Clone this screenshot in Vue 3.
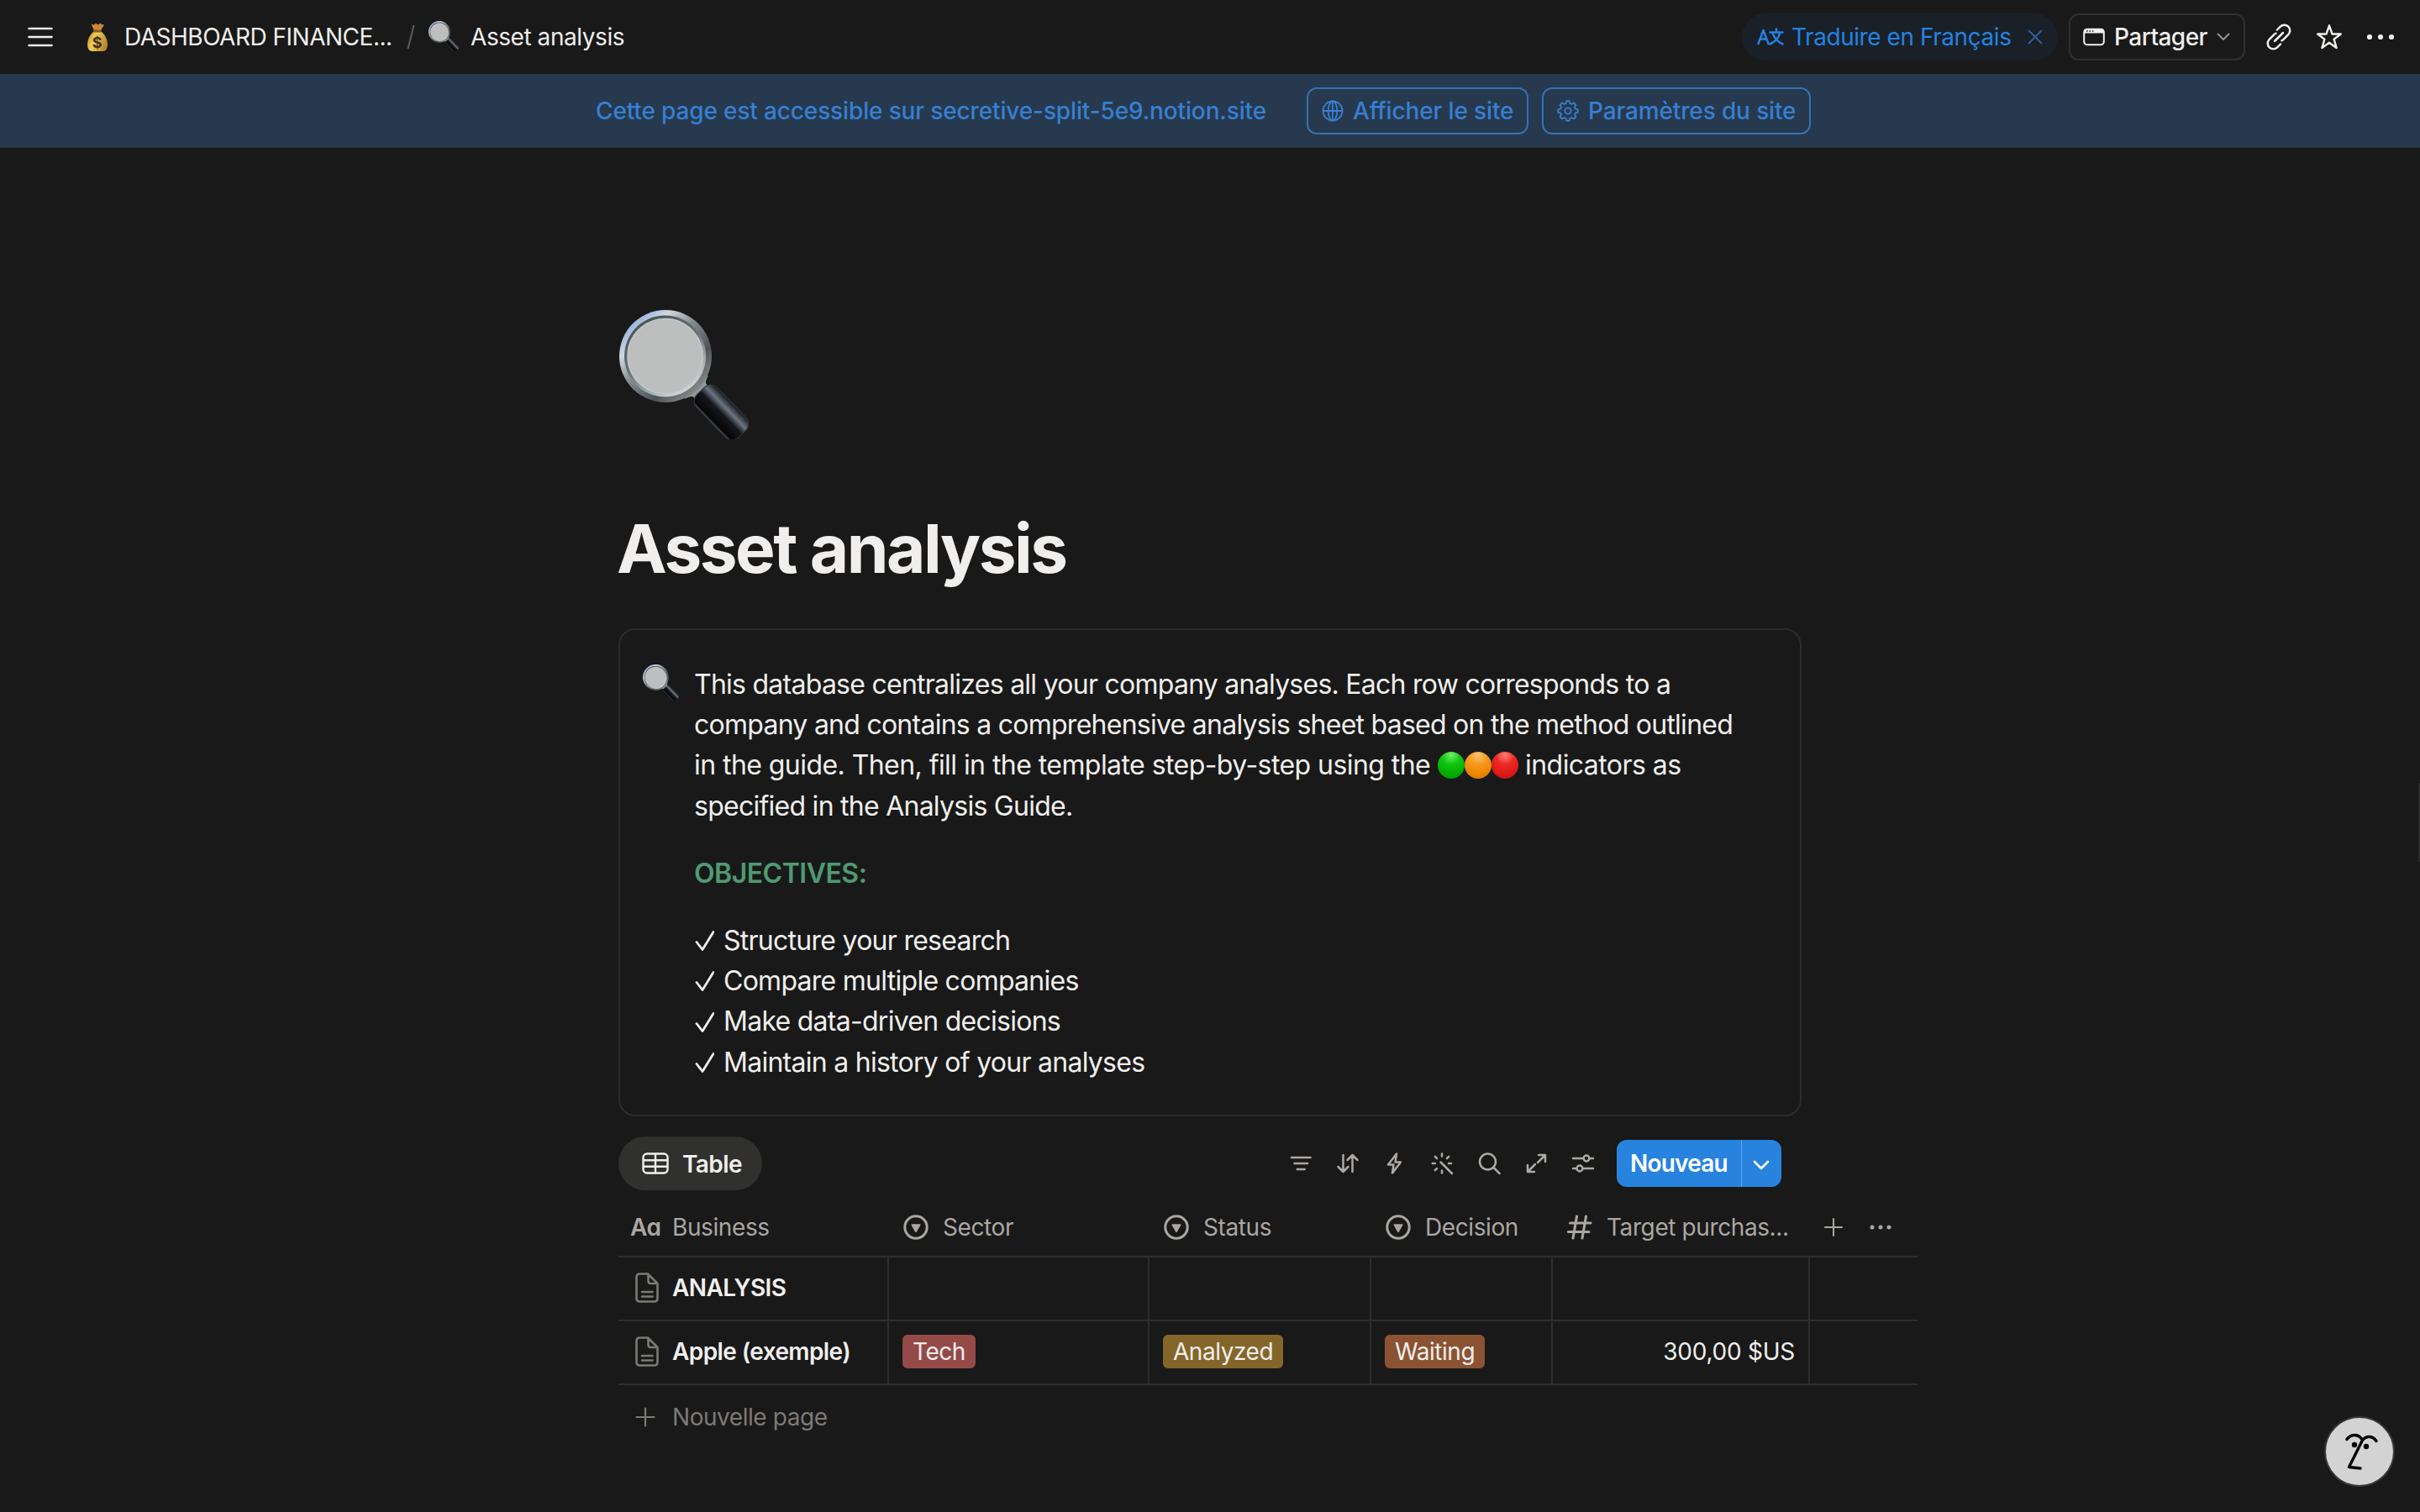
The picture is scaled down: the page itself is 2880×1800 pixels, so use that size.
<script setup>
const goals = [
  'Structure your research',
  'Compare multiple companies',
  'Make data-driven decisions',
  'Maintain a history of your analyses',
]

const selectColumns = [
  { key: 'sector', label: 'Sector' },
  { key: 'status', label: 'Status' },
  { key: 'decision', label: 'Decision' },
]

const rows = [
  { name: 'ANALYSIS' },
  {
    name: 'Apple (exemple)',
    sector: { text: 'Tech', color: 'red' },
    status: { text: 'Analyzed', color: 'yellow' },
    decision: { text: 'Waiting', color: 'orange' },
    target: '300,00 $US',
  },
]
</script>

<template>
  <div class="page">
    <svg class="sprite" width="0" height="0">
      <defs>
        <linearGradient id="rim" x1="0.1" y1="0.1" x2="0.85" y2="0.9">
          <stop offset="0" stop-color="#86a9dc" />
          <stop offset="0.22" stop-color="#cfd8e0" />
          <stop offset="0.45" stop-color="#858d91" />
          <stop offset="0.75" stop-color="#4d5458" />
          <stop offset="1" stop-color="#8b8e8e" />
        </linearGradient>
        <linearGradient id="rim-inner" x1="0" y1="0" x2="0.6" y2="1">
          <stop offset="0" stop-color="#41474b" />
          <stop offset="0.55" stop-color="#6a7275" />
          <stop offset="1" stop-color="#cdd3d3" />
        </linearGradient>
        <linearGradient id="grip" x1="0" y1="0" x2="0" y2="1">
          <stop offset="0" stop-color="#14171e" />
          <stop offset="0.28" stop-color="#6d7580" />
          <stop offset="0.52" stop-color="#14161a" />
          <stop offset="0.92" stop-color="#050607" />
          <stop offset="1" stop-color="#5c5f63" />
        </linearGradient>
        <linearGradient id="bag" x1="0" y1="0" x2="1" y2="0.4">
          <stop offset="0" stop-color="#b8862c" />
          <stop offset="0.45" stop-color="#f0cf58" />
          <stop offset="1" stop-color="#b98a2b" />
        </linearGradient>
      </defs>
      <symbol id="loupe" viewBox="0 0 154 154">
        <path d="M78 106 Q88 100 90 106 L106 90 Q100 88 106 78 L90 80 Z" fill="#8f979b" />
        <circle cx="55" cy="55" r="55" fill="url(#rim)" />
        <circle cx="54.5" cy="55" r="48.5" fill="url(#rim-inner)" />
        <circle cx="54.5" cy="55" r="44.5" fill="#bdbebe" stroke="#c3caca" stroke-width="1.5" />
        <g transform="rotate(46 121.5 122)">
          <rect x="86" y="105" width="71" height="34" rx="11" fill="url(#grip)" stroke="#34373b" stroke-width="1" />
        </g>
      </symbol>
      <symbol id="select-type" viewBox="0 0 30 30">
        <circle cx="15" cy="15" r="13.2" fill="none" stroke="currentColor" stroke-width="3" />
        <path d="M10.3 11.2h9.4q1.2 0 .7 1.2l-4.5 8q-.9 1.2-1.8 0l-4.5-8q-.5-1.2.7-1.2z" fill="currentColor" />
      </symbol>
    </svg>

    <header class="topbar">
      <svg class="menu" width="30" height="24" viewBox="0 0 30 24" stroke="currentColor" stroke-width="2.6" stroke-linecap="round">
        <path d="M1.5 2h27M1.5 12h27M1.5 22h27" />
      </svg>
      <svg class="money" width="28" height="36" viewBox="0 0 28 36">
        <path d="M6.5 2.5l3 1.2L12 1.8l2.5 1.7L18 1.5l1 2 3-.5-4.5 8.5h-7z" fill="#c98a3b" />
        <path d="M10 11q-8 7-8 15.500 0 8.500 6 8.500h12q6 0 6-8.500 0-8.500-8-15.500z" fill="url(#bag)" />
        <rect x="9" y="9.500" width="10" height="3" rx="1.5" fill="#8a5a22" />
        <text x="13.500" y="30.500" text-anchor="middle" class="dollar">$</text>
      </svg>
      <span class="crumb parent">DASHBOARD FINANCE...</span>
      <svg class="slash" width="10" height="30" viewBox="0 0 10 30" stroke="#5b5a57" stroke-width="2"><path d="M1.500 29L8.500 1" /></svg>
      <svg class="crumb-loupe" width="38" height="36"><use href="#loupe" /></svg>
      <span class="crumb current">Asset analysis</span>

      <div class="translate">
        <svg width="32" height="26" viewBox="0 0 32 26" fill="none" stroke="currentColor" stroke-width="2.5" stroke-linecap="round" stroke-linejoin="round">
          <path d="M1.500 21L7.500 5l6 16M3.800 15.500h7.500M15.500 7.500h15M23 3.500v4M27.500 8q-2.500 9-12 13.500M18.500 8q2.500 9 12 13.500" />
        </svg>
        <span class="translate-text">Traduire en Français</span>
        <svg class="close" width="18" height="18" viewBox="0 0 18 18" stroke="currentColor" stroke-width="2" stroke-linecap="round"><path d="M1.500 1.500l15 15M16.500 1.500l-15 15" /></svg>
      </div>
      <div class="share">
        <svg width="26" height="22" viewBox="0 0 26 22">
          <rect x="1.200" y="1.700" width="23.600" height="18.600" rx="3.800" fill="none" stroke="currentColor" stroke-width="2" />
          <path d="M1 6.500V5q0-4 4-4h16q4 0 4 4v1.500z" fill="currentColor" />
          <path d="M4 4h1.600M7.400 4h1.600M10.800 4h1.600" stroke="#191919" stroke-width="1.500" />
        </svg>
        <span class="share-text">Partager</span>
        <svg class="share-chevron" width="16" height="10" viewBox="0 0 16 10" fill="none" stroke="#94928e" stroke-width="2" stroke-linecap="round" stroke-linejoin="round"><path d="M1.500 1.500L8 8l6.500-6.500" /></svg>
      </div>
      <svg class="link" width="32" height="32" viewBox="0 0 32 32" fill="none" stroke="currentColor" stroke-width="2.500" stroke-linecap="round">
        <path d="M14 7.500l3.800-3.900a6.700 6.700 0 0 1 9.500 9.500l-5.700 5.700a6.700 6.700 0 0 1-2.200 1.500" />
        <path d="M18 24.500l-3.800 3.900a6.700 6.700 0 0 1-9.500-9.500l5.700-5.700a6.700 6.700 0 0 1 2.200-1.500" />
        <path d="M11 21L21 11" />
      </svg>
      <svg class="star" width="32" height="32" viewBox="0 0 32 32" fill="none" stroke="currentColor" stroke-width="2.400" stroke-linejoin="round">
        <path d="M16 2.300l3.500 10.200h10.300l-8.200 6.200 3 10.300L16 22.800 7.400 29l3-10.300-8.200-6.200h10.300z" />
      </svg>
      <svg class="more" width="34" height="8" viewBox="0 0 34 8" fill="currentColor"><circle cx="4" cy="4" r="3.100" /><circle cx="17" cy="4" r="3.100" /><circle cx="30" cy="4" r="3.100" /></svg>
    </header>

    <div class="banner">
      <span class="banner-text">Cette page est accessible sur secretive-split-5e9.notion.site</span>
      <div class="banner-btn view">
        <svg width="26" height="26" viewBox="0 0 26 26" fill="none" stroke="currentColor" stroke-width="1.800">
          <circle cx="13" cy="13" r="11.500" /><ellipse cx="13" cy="13" rx="5.300" ry="11.500" /><path d="M1.500 13h23M13 1.500v23" />
        </svg>
        <span class="view-text">Afficher le site</span>
      </div>
      <div class="banner-btn settings">
        <svg width="26" height="26" viewBox="0 0 26 26" fill="none" stroke="currentColor" stroke-width="1.900" stroke-linejoin="round">
          <path d="M11.300 1.200h3.400l.7 2.900 2 .9 2.600-1.500 2.500 2.500L21 8.600l.9 2 2.900.7v3.400l-2.900.7-.9 2 1.500 2.600-2.500 2.500-2.600-1.500-2 .9-.7 2.900h-3.400l-.7-2.900-2-.9L6 22.500 3.500 20 5 17.400l-.9-2-2.900-.7v-3.400l2.900-.7.9-2L3.500 6 6 3.500 8.600 5l2-.9z" />
          <circle cx="13" cy="13" r="3.600" />
        </svg>
        <span class="settings-text">Paramètres du site</span>
      </div>
    </div>

    <main class="content">
      <svg class="page-icon" width="154" height="154"><use href="#loupe" /></svg>
      <h1 class="title">Asset analysis</h1>

      <section class="callout">
        <svg class="callout-icon" width="43" height="43"><use href="#loupe" /></svg>
        <div class="callout-body">
          <p class="line">This database centralizes all your company analyses. Each row corresponds to a</p>
          <p class="line">company and contains a comprehensive analysis sheet based on the method outlined</p>
          <p class="line dotted">in the guide. Then, fill in the template step-by-step using the <i class="dot green"></i><i class="dot amber"></i><i class="dot crimson"></i> indicators as</p>
          <p class="line">specified in the Analysis Guide.</p>
          <p class="objectives">OBJECTIVES:</p>
          <p v-for="goal in goals" :key="goal" class="line goal">
            <svg width="24" height="28" viewBox="0 0 24 28" fill="none" stroke="currentColor" stroke-width="2.800" stroke-linecap="round" stroke-linejoin="round"><path d="M3 15.500L10 24.500 23 3.500" /></svg>
            <span>{{ goal }}</span>
          </p>
        </div>
      </section>

      <div class="toolbar">
        <div class="tab">
          <svg width="32" height="26" viewBox="0 0 32 26" fill="none" stroke="currentColor" stroke-width="2.400">
            <rect x="1.500" y="1.500" width="29" height="23" rx="4.500" /><path d="M1.500 9.300h29M1.500 16.800h29M16 1.500v23" />
          </svg>
          <span>Table</span>
        </div>
        <div class="tools">
          <svg viewBox="0 0 28 28"><path d="M3 7h22.500M6.500 14h15.500M9.800 21h8.900" /></svg>
          <svg viewBox="0 0 28 28"><path d="M8.500 4v20M2.500 18l6 6 6-6M19.500 24V4M13.500 10l6-6 6 6" /></svg>
          <svg viewBox="0 0 28 28"><path d="M16 2.500L6 15.500h6.500L11 25.500 21 12.500h-6.500z" /></svg>
          <svg viewBox="0 0 28 28"><path d="M12.500 12.500L26 26M14 2.500v3M2.800 14h3M22 14h3M14 22.500v3M5.800 5.800l2.200 2.200M22.200 5.800L20 8M5.800 22.200L8 20" /></svg>
          <svg viewBox="0 0 28 28"><circle cx="12.500" cy="12" r="9.500" /><path d="M19.500 19l7 7" /></svg>
          <svg viewBox="0 0 28 28"><path d="M17 4h8v8M24.500 4.500L16 13M4 16v8h8M4.500 23.500L13 15" /></svg>
          <svg viewBox="0 0 28 28"><path d="M2 8h12.500M21.500 8H26M2 20h4.500M13.500 20H26" /><circle cx="18" cy="8" r="3.400" /><circle cx="10" cy="20" r="3.400" /></svg>
        </div>
        <div class="new-btn">
          <span class="new-text">Nouveau</span>
          <span class="new-arrow">
            <svg width="20" height="12" viewBox="0 0 20 12" fill="none" stroke="currentColor" stroke-width="2.600" stroke-linecap="round" stroke-linejoin="round"><path d="M2 2l8 8 8-8" /></svg>
          </span>
        </div>
      </div>

      <div class="table">
        <div class="row head">
          <div class="cell name"><span class="aa">Aa</span><span class="business">Business</span></div>
          <div v-for="col in selectColumns" :key="col.key" class="cell" :class="col.key">
            <svg class="type" width="30" height="30"><use href="#select-type" /></svg>
            <span>{{ col.label }}</span>
          </div>
          <div class="cell target">
            <svg class="hash" width="30" height="30" viewBox="0 0 30 30" fill="none" stroke="currentColor" stroke-width="3.100" stroke-linecap="round"><path d="M11.500 2L7 28M22.500 2L18 28M3.500 10h24.500M1.500 20.500h24.500" /></svg>
            <span class="target-label">Target purchas...</span>
          </div>
          <div class="cell extra">
            <svg width="22" height="22" viewBox="0 0 22 22" stroke="currentColor" stroke-width="2" stroke-linecap="round"><path d="M11 1v20M1 11h20" /></svg>
            <svg class="head-more" width="26" height="6" viewBox="0 0 26 6" fill="currentColor"><circle cx="3" cy="3" r="2.500" /><circle cx="13" cy="3" r="2.500" /><circle cx="23" cy="3" r="2.500" /></svg>
          </div>
        </div>
        <div v-for="row in rows" :key="row.name" class="row body">
          <div class="cell name">
            <svg class="doc" width="28" height="36" viewBox="0 0 28 36" fill="none" stroke="currentColor" stroke-width="2.600" stroke-linecap="round" stroke-linejoin="round">
              <path d="M5.500 1.500h9.500L26.500 13v17.500q0 4-4 4h-17q-4 0-4-4v-25q0-4 4-4zM15.500 2v8q0 3 3 3h8M8 23h12.500M8 28.500h12.500" />
            </svg>
            <span class="row-name">{{ row.name }}</span>
          </div>
          <div v-for="col in selectColumns" :key="col.key" class="cell" :class="col.key">
            <span v-if="row[col.key]" class="tag" :class="row[col.key].color">{{ row[col.key].text }}</span>
          </div>
          <div class="cell target">{{ row.target }}</div>
          <div class="cell extra"></div>
        </div>
        <div class="new-page">
          <svg width="24" height="24" viewBox="0 0 24 24" stroke="currentColor" stroke-width="2.200" stroke-linecap="round"><path d="M12 1.500v21M1.500 12h21" /></svg>
          <span>Nouvelle page</span>
        </div>
      </div>
    </main>

    <div class="scroll-mark"></div>
    <div class="assistant">
      <svg width="80" height="80" viewBox="0 0 80 80" fill="none" stroke="#000" stroke-width="3.400" stroke-linecap="round" stroke-linejoin="round">
        <path d="M25 25.500q3.500-5 9-5 5.500 0 8.500 4.500M60 27.500q-3.500-5.500-9.500-5-5 .5-7.500 5L27.500 58.500 41 60" />
        <circle cx="34" cy="32" r="3.200" fill="#000" stroke="none" /><circle cx="48" cy="34" r="3.200" fill="#000" stroke="none" />
      </svg>
    </div>
  </div>
</template>

<style>
body {
  background: #191919;
}
</style>

<style scoped>
.page {
  position: relative;
  width: 2880px;
  height: 1800px;
  overflow: hidden;
  background: #191919;
  color: #f0efed;
  font-family: Inter, 'Liberation Sans', sans-serif;
  font-size: 28px;
  line-height: 36px;
  letter-spacing: -0.4px;
  white-space: nowrap;
}
.page * {
  box-sizing: border-box;
}
.page svg {
  flex: none;
  display: block;
}
.page .sprite {
  position: absolute;
}

.topbar {
  display: flex;
  align-items: center;
  height: 88px;
  padding-left: 33px;
}
.money {
  margin-left: 39px;
}
.dollar {
  font-size: 18px;
  font-weight: 700;
  fill: #453013;
}
.crumb {
  flex: none;
}
.parent {
  width: 319px;
  margin-left: 18px;
  letter-spacing: -0.5px;
}
.slash {
  margin-left: 17px;
}
.crumb-loupe {
  margin-left: 15px;
  margin-top: -2px;
}
.current {
  width: 1513px;
  margin-left: 13px;
  letter-spacing: -0.44px;
}
.translate {
  display: flex;
  flex: none;
  align-items: center;
  width: 376px;
  height: 56px;
  padding-left: 18px;
  border-radius: 28px;
  background: #1a2027;
  color: #2383e2;
}
.translate-text {
  width: 261px;
  margin-left: 9px;
  letter-spacing: -0.44px;
}
.close {
  margin-left: 20px;
  color: #2c5f95;
}
.share {
  display: flex;
  flex: none;
  align-items: center;
  width: 210px;
  height: 56px;
  margin-left: 13px;
  padding-left: 15px;
  border: 2px solid #303030;
  border-radius: 12px;
}
.share-text {
  width: 111px;
  margin-left: 11px;
  font-weight: 500;
  letter-spacing: -0.55px;
}
.share-chevron {
  margin-left: 11px;
}
.link {
  margin-left: 24px;
}
.star {
  margin-left: 28px;
}
.more {
  margin-left: 28px;
}

.banner {
  display: flex;
  align-items: center;
  height: 88px;
  padding-left: 709px;
  background: #26394f;
  color: #377fd0;
  font-weight: 500;
  letter-spacing: -0.14px;
}
.banner-text {
  width: 846px;
}
.banner-btn {
  display: flex;
  align-items: center;
  height: 56px;
  padding-left: 16px;
  border: 2px solid #3472b0;
  border-radius: 12px;
}
.view {
  width: 264px;
}
.settings {
  width: 320px;
  margin-left: 16px;
}
.view-text,
.settings-text {
  margin-left: 11px;
}

.content {
  padding-left: 736px;
}
.page-icon {
  margin: 193px 0 0 1px;
  overflow: visible;
}
.title {
  margin: 83px 0 0 -2px;
  height: 96px;
  font-size: 80px;
  line-height: 94px;
  font-weight: 700;
  letter-spacing: -2.45px;
}
.callout {
  display: flex;
  width: 1408px;
  height: 581px;
  margin-top: 46px;
  padding: 41px 0 0 27px;
  border: 2px solid #2c2c2c;
  border-radius: 20px;
}
.callout-body {
  margin-left: 18px;
  font-size: 32px;
  line-height: 48.2px;
  letter-spacing: -0.74px;
}
.callout-body p {
  margin: 0;
}
.callout-body .dotted {
  letter-spacing: -0.56px;
}
.dot {
  display: inline-block;
  width: 32px;
  height: 32px;
  border-radius: 50%;
  vertical-align: -5px;
}
.green {
  background: radial-gradient(circle at 50% 12%, #6df06a 0, #12c512 35%, #00a900 75%, #069306 100%);
}
.amber {
  background: radial-gradient(circle at 50% 12%, #ffc274 0, #f69a1e 35%, #e98400 75%, #d27200 100%);
}
.crimson {
  background: radial-gradient(circle at 50% 12%, #ff7d77 0, #ee2a25 35%, #d91717 75%, #bb1414 100%);
}
.callout-body .objectives {
  margin: 32px 0;
  color: #4f9a73;
  font-weight: 600;
  letter-spacing: -0.5px;
}
.goal {
  display: flex;
  align-items: center;
  letter-spacing: -0.73px;
}
.goal span {
  margin-left: 11px;
}

.toolbar {
  display: flex;
  align-items: center;
  width: 1384px;
  height: 64px;
  margin-top: 24px;
}
.tab {
  display: flex;
  align-items: center;
  width: 171px;
  height: 64px;
  padding-left: 28px;
  border-radius: 32px;
  background: #30302e;
  font-weight: 600;
}
.tab span {
  margin-left: 16px;
  padding-top: 2px;
  letter-spacing: -0.6px;
}
.tools {
  display: flex;
  gap: 28px;
  margin-left: auto;
  margin-right: 26px;
  color: #ada9a3;
}
.tools svg {
  width: 28px;
  height: 28px;
  fill: none;
  stroke: currentColor;
  stroke-width: 2.5;
  stroke-linecap: round;
  stroke-linejoin: round;
}
.new-btn {
  display: flex;
  width: 196px;
  height: 56px;
  border-radius: 12px;
  background: #2783de;
  color: #fff;
  font-weight: 600;
  line-height: 56px;
  letter-spacing: -0.8px;
}
.new-text {
  width: 149px;
  padding-left: 16px;
  border-right: 1px solid #5ba2e6;
}
.new-arrow {
  display: flex;
  align-items: center;
  padding: 4px 0 0 13px;
}

.table {
  width: 1546px;
}
.row {
  display: flex;
  border-bottom: 2px solid #2d2d2d;
}
.cell {
  display: flex;
  align-items: center;
  flex: none;
}
.name {
  width: 322px;
}
.sector {
  width: 310px;
}
.status {
  width: 264px;
}
.decision {
  width: 216px;
}
.target {
  width: 306px;
}
.extra {
  width: 128px;
}
.head {
  height: 80px;
  padding-top: 9px;
  color: #aaa7a2;
}
.head .cell {
  height: 69px;
}
.head span {
  padding-top: 1px;
}
.aa {
  width: 50px;
  margin-left: 14px;
  font-weight: 600;
  font-feature-settings: 'cv11';
}
.type {
  margin-left: 17px;
  margin-right: 17px;
}
.hash {
  margin-left: 17px;
}
.target-label {
  margin-left: 17px;
}
.extra svg:first-child {
  margin-left: 17px;
}
.head-more {
  margin-left: 32px;
}
.body {
  height: 76px;
}
.body .cell:not(.extra) {
  padding-bottom: 2px;
  border-right: 2px solid #2d2d2d;
}
.doc {
  margin-left: 20px;
  color: #7d7a75;
}
.row-name {
  margin-left: 16px;
  font-weight: 600;
  letter-spacing: -0.6px;
}
.body .target {
  justify-content: flex-end;
  padding-right: 16px;
  letter-spacing: -0.25px;
}
.tag {
  height: 40px;
  margin-left: 16px;
  padding: 0 12px;
  border-radius: 6px;
  line-height: 40px;
  letter-spacing: -0.45px;
}
.red {
  background: #944a47;
}
.yellow {
  background: #84662a;
}
.orange {
  background: #8b5332;
}
.new-page {
  display: flex;
  align-items: center;
  height: 76px;
  padding-left: 20px;
  color: #7d7a75;
  letter-spacing: -0.45px;
}
.new-page span {
  margin-left: 20px;
  padding-bottom: 1px;
}

.scroll-mark {
  position: absolute;
  right: 0;
  top: 932px;
  width: 2px;
  height: 94px;
  background: #2d2d2d;
}
.assistant {
  position: absolute;
  left: 2766px;
  top: 1686px;
  width: 84px;
  height: 84px;
  border: 2px solid #383838;
  border-radius: 50%;
  background: #d3d3d3;
}
</style>
